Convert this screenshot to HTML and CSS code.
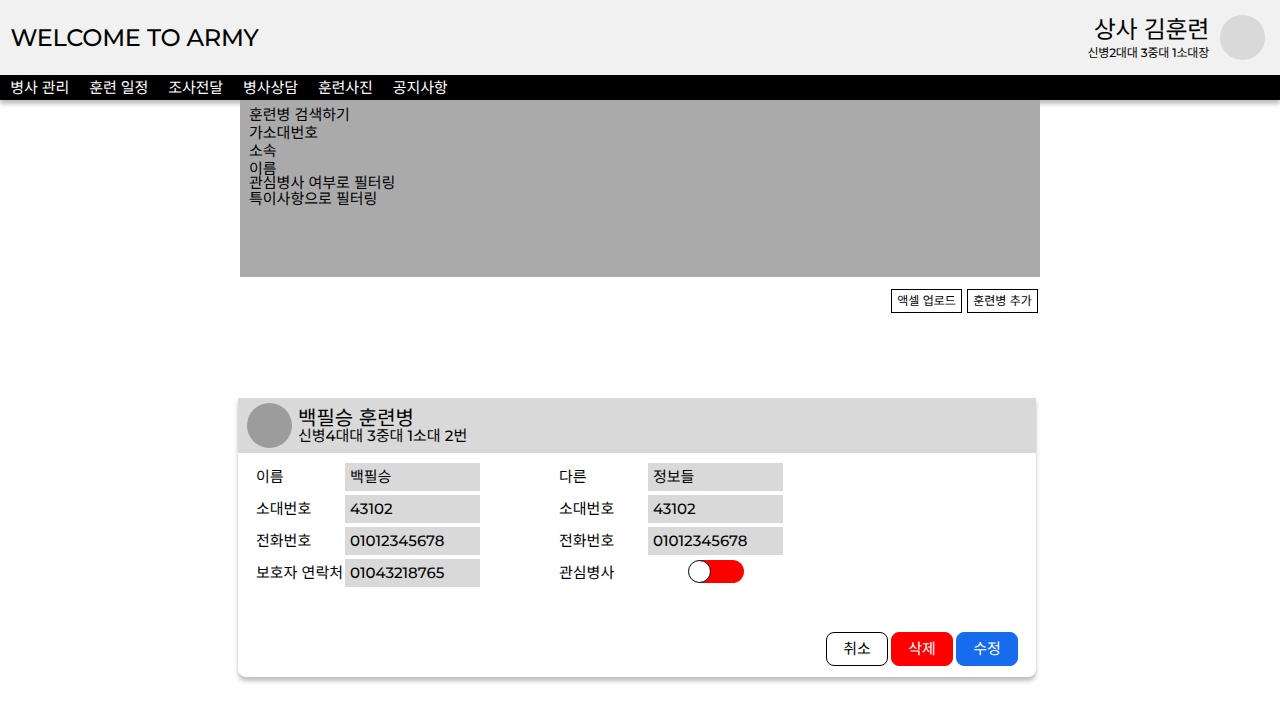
FILE: index.html
```html
<!DOCTYPE html>
<html lang="ko">
<head>
<meta charset="utf-8">
<title>WELCOME TO ARMY</title>
<link rel="stylesheet" href="styles.css">
</head>
<body>
<header class="header">
  <div class="topbar">
    <h1 class="brand">WELCOME TO ARMY</h1>
    <div class="profile">
      <div class="profile-text">
        <div class="profile-name">상사 김훈련</div>
        <div class="profile-unit">신병<span class="num">2</span>대대 <span class="num">3</span>중대 <span class="num">1</span>소대장</div>
      </div>
      <div class="avatar"></div>
    </div>
  </div>
  <nav class="nav">
    <a>병사 관리</a><a>훈련 일정</a><a>조사전달</a><a>병사상담</a><a>훈련사진</a><a>공지사항</a>
  </nav>
</header>
<main class="content">
  <section class="search">
    <div>훈련병 검색하기</div>
    <div>가소대번호</div>
    <div>소속</div>
    <div>이름</div>
    <div class="filter-interest">관심병사 여부로 필터링</div>
    <div class="filter-note">특이사항으로 필터링</div>
  </section>
  <div class="tools">
    <button class="tool">액셀 업로드</button>
    <button class="tool">훈련병 추가</button>
  </div>
  <section class="card">
    <div class="card-head">
      <div class="avatar avatar-dark"></div>
      <div class="card-title">
        <div class="trainee">백필승 훈련병</div>
        <div class="unit">신병<span class="num">4</span>대대 <span class="num">3</span>중대 <span class="num">1</span>소대 <span class="num">2</span>번</div>
      </div>
    </div>
    <div class="fields">
      <div class="column">
        <div class="row"><span class="label">이름</span><span class="value">백필승</span></div>
        <div class="row"><span class="label">소대번호</span><span class="value digits">43102</span></div>
        <div class="row"><span class="label">전화번호</span><span class="value digits">01012345678</span></div>
        <div class="row"><span class="label">보호자 연락처</span><span class="value digits">01043218765</span></div>
      </div>
      <div class="column">
        <div class="row"><span class="label">다른</span><span class="value">정보들</span></div>
        <div class="row"><span class="label">소대번호</span><span class="value digits">43102</span></div>
        <div class="row"><span class="label">전화번호</span><span class="value digits">01012345678</span></div>
        <div class="row"><span class="label">관심병사</span><span class="toggle"><span class="knob"></span></span></div>
      </div>
    </div>
    <div class="actions">
      <button class="action">취소</button>
      <button class="action delete">삭제</button>
      <button class="action edit">수정</button>
    </div>
  </section>
</main>
</body>
</html>
```
FILE: styles.css
```css
* { box-sizing: border-box; }
body {
  margin: 0;
  height: 720px;
  overflow: hidden;
  background: #fff;
  color: #000;
  font: 15px/18px "Noto Sans CJK KR", sans-serif;
  text-rendering: geometricPrecision;
  white-space: nowrap;
}
button { font-family: inherit; color: inherit; padding: 0; text-rendering: inherit; }
.num { font-family: Montserrat, Inter, sans-serif; font-weight: 500; }
.header { box-shadow: 0 4px 4px rgba(0, 0, 0, .25); }
.topbar {
  height: 75px;
  padding: 0 15px 0 10.4px;
  display: flex;
  align-items: center;
  justify-content: space-between;
  background: #f1f1f1;
}
.brand {
  margin: 0;
  padding-top: 2px;
  font: 500 24px/29px Montserrat, Inter, sans-serif;
  letter-spacing: -.26px;
}
.profile { display: flex; align-items: center; gap: 11px; }
.profile-text { text-align: right; padding-top: 1px; }
.profile-name { font-size: 24px; line-height: 29px; letter-spacing: -.3px; }
.profile-unit { padding-top: 1px; font-size: 12px; line-height: 20px; letter-spacing: -.2px; }
.avatar { width: 45px; height: 45px; border-radius: 50%; background: #d9d9d9; }
.avatar-dark { background: #9c9c9c; }
.nav {
  height: 25px;
  padding-left: 10.3px;
  display: flex;
  gap: 20px;
  background: #000;
  color: #fff;
  line-height: 25px;
  letter-spacing: -.09px;
}
.content { position: relative; width: 800px; margin: 0 auto; }
.search { height: 177px; padding: 6px 9px; background: #aaa; }
.filter-interest { line-height: 10px; }
.filter-note { line-height: 22px; }
.tools { display: flex; justify-content: flex-end; gap: 5px; padding: 12px 2px 0 0; }
.tool {
  width: 71px;
  height: 24px;
  border: 1px solid #000;
  background: #fff;
  font-size: 12px;
  line-height: 22px;
}
.card {
  width: 798px;
  height: 279px;
  margin: 85px 0 0 -2px;
  background: #fff;
  border-radius: 0 0 8px 8px;
  box-shadow: 0 4px 4px rgba(0, 0, 0, .25);
}
.card-head {
  height: 55px;
  padding-left: 9px;
  display: flex;
  align-items: center;
  gap: 6px;
  background: #d9d9d9;
}
.card-title { padding-top: 2px; }
.trainee { font-size: 20px; line-height: 18px; }
.unit { line-height: 19px; letter-spacing: -.03px; }
.fields { display: flex; gap: 79px; padding: 10px 18px 0; }
.column { display: grid; gap: 4px; }
.row { height: 28px; display: flex; line-height: 28px; }
.label { width: 89px; }
.value { width: 135px; padding-left: 5px; background: #d9d9d9; }
.digits { font-family: Montserrat, Inter, sans-serif; font-weight: 500; }
.toggle {
  width: 56px;
  height: 23px;
  margin: 1px 0 0 40px;
  border-radius: 12px;
  background: linear-gradient(90deg, transparent 11px, #f00 11px);
}
.knob {
  display: block;
  width: 23px;
  height: 23px;
  border: 1px solid #000;
  border-radius: 50%;
  background: #fff;
}
.actions { display: flex; justify-content: flex-end; gap: 3px; padding: 45px 18px 0; }
.action {
  width: 62px;
  height: 34px;
  border: 1px solid #000;
  border-radius: 8px;
  background: #fff;
  font-size: 15px;
  line-height: 32px;
}
.delete { background: #f00; border-color: #f00; color: #fff; }
.edit { background: #176bed; border-color: #176bed; color: #fff; }
```
